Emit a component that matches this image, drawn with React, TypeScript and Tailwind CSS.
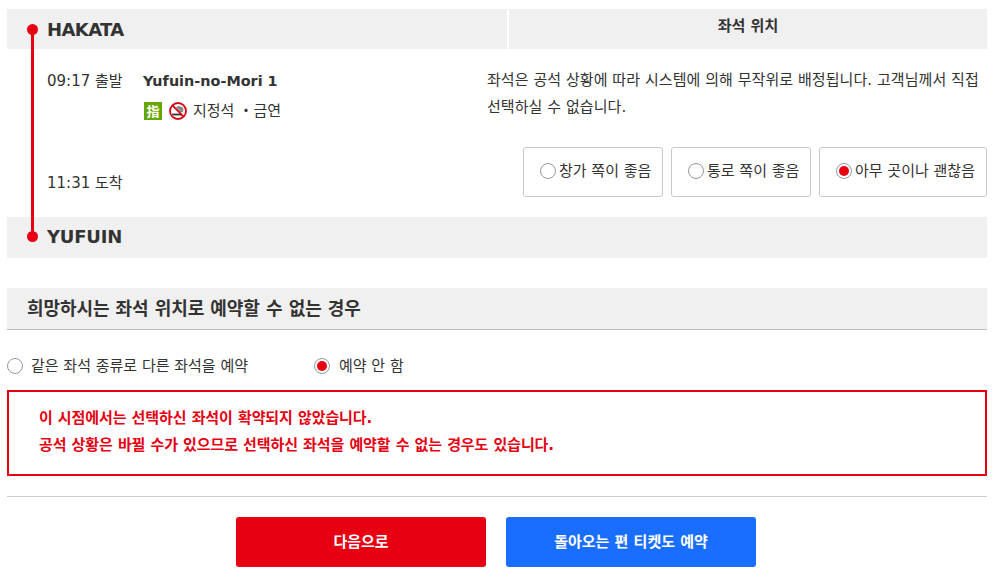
import React from "react";

const font = "font-['Verdana','DejaVu_Sans','Noto_Sans_CJK_KR',sans-serif]";

function Radio({ on }: { on?: boolean }) {
  return (
    <span className="w-4 h-4 shrink-0 rounded-full border border-[#999] bg-white flex items-center justify-center">
      {on && <span className="w-2.5 h-2.5 rounded-full bg-[#e60012]"></span>}
    </span>
  );
}

function SeatOption({ label, on, width }: { label: string; on?: boolean; width: string }) {
  return (
    <div className={`${width} pl-4 pb-0.5 h-[50px] border border-[#c8c8c8] rounded-[3px] flex items-center gap-[3px] text-[15px] text-[#333]`}>
      <Radio on={on} />
      <span className="whitespace-nowrap">{label}</span>
    </div>
  );
}

function NoSmoking() {
  return (
    <svg width="18" height="18" viewBox="0 0 18 18" className="shrink-0">
      <circle cx="9" cy="9" r="8" fill="#fff" stroke="#d7000f" strokeWidth="1.8" />
      <path d="M3.2 11.6h9.8v1.8H3.2z" fill="#333" />
      <path d="M7 6.2c.6-2.4 3.6-3 5-1.4 1.6 0 2.8 1.4 2.4 3.4l-.6 2-3.6-.2c.4-1.6-.6-3-2.8-3.8z" fill="#888" />
      <path d="M3.4 3.4l11.2 11.2" stroke="#d7000f" strokeWidth="1.8" />
    </svg>
  );
}

export default function App() {
  return (
    <div className={`w-[995px] h-[580px] bg-white overflow-hidden pt-[9px] pl-[7px] ${font}`}>
      <div className="w-[980px]">
        <div className="relative">
          <div className="absolute left-[24px] top-[20px] h-[208px] w-[3px] bg-[#e60012]"></div>
          <div className="absolute left-[20px] top-[15px] w-[11px] h-[11px] rounded-full bg-[#e60012]"></div>
          <div className="absolute left-[20px] top-[222px] w-[11px] h-[11px] rounded-full bg-[#e60012]"></div>

          <div className="flex h-10">
            <div className="w-[500px] bg-[#f0f0f0] pl-10 flex items-center text-[18px] font-bold tracking-[-0.6px] text-[#333]">HAKATA</div>
            <div className="flex-1 ml-0.5 bg-[#f0f0f0] flex items-center justify-center pb-1.5 text-[15px] font-bold text-[#333]">좌석 위치</div>
          </div>

          <div className="flex h-[168px]">
            <div className="w-[480px] pl-10 pt-[22px] text-[#333] text-[15px]">
              <div className="flex">
                <div className="w-[96px] h-5 leading-5">09:17 출발</div>
                <div className="flex flex-col">
                  <div className="h-5 leading-5 text-[14.4px] font-bold">Yufuin-no-Mori 1</div>
                  <div className="flex items-center mt-[10px] h-5">
                    <span className="ml-px w-[18px] h-[18px] bg-[#66a600] text-white text-[13px] font-bold flex items-center justify-center font-['Noto_Sans_CJK_JP',sans-serif]">指</span>
                    <span className="ml-[7px]"><NoSmoking /></span>
                    <span className="ml-[6px]">지정석</span>
                    <span className="ml-[4px]">・금연</span>
                  </div>
                </div>
              </div>
              <div className="mt-[52px] h-5 leading-5">11:31 도착</div>
            </div>
            <div className="flex-1 pt-[18px]">
              <p className="text-[15px] leading-[27px] tracking-[0.06px] text-[#333]">
                좌석은 공석 상황에 따라 시스템에 의해 무작위로 배정됩니다. 고객님께서 직접 선택하실 수 없습니다.
              </p>
              <div className="flex justify-end gap-2 mt-[26px]">
                <SeatOption label="창가 쪽이 좋음" width="w-[140px]" />
                <SeatOption label="통로 쪽이 좋음" width="w-[140px]" />
                <SeatOption label="아무 곳이나 괜찮음" on width="w-[168px]" />
              </div>
            </div>
          </div>

          <div className="h-[41px] bg-[#f0f0f0] pl-10 flex items-center pb-0.5 text-[18px] font-bold tracking-[-0.2px] text-[#333]">YUFUIN</div>
        </div>

        <div className="mt-[30px] h-[42px] bg-[#f0f0f0] border-b border-[#bbb] pl-5 flex items-center text-[18px] tracking-[-0.08px] font-bold text-[#333]">
          희망하시는 좌석 위치로 예약할 수 없는 경우
        </div>

        <div className="flex items-center mt-[26px] h-5 text-[15px] text-[#333]">
          <div className="w-[307px] flex items-center gap-2">
            <Radio />
            <span>같은 좌석 종류로 다른 좌석을 예약</span>
          </div>
          <div className="flex items-center gap-[9px]">
            <Radio on />
            <span>예약 안 함</span>
          </div>
        </div>

        <div className="mt-[14px] h-[86px] border-2 border-[#e60012] pl-[30px] pt-[13px] text-[15px] font-bold leading-[27px] tracking-[-0.08px] text-[#e60012]">
          <p>이 시점에서는 선택하신 좌석이 확약되지 않았습니다.</p>
          <p>공석 상황은 바뀔 수가 있으므로 선택하신 좌석을 예약할 수 없는 경우도 있습니다.</p>
        </div>

        <div className="mt-5 border-t border-[#ccc] pt-5 pr-0.5 flex justify-center gap-5">
          <button className="w-[250px] h-[50px] rounded-[3px] bg-[#e60012] text-white text-[15px] font-bold">다음으로</button>
          <button className="w-[250px] h-[50px] rounded-[3px] bg-[#1a6eff] text-white text-[15px] font-bold">돌아오는 편 티켓도 예약</button>
        </div>
      </div>
    </div>
  );
}
